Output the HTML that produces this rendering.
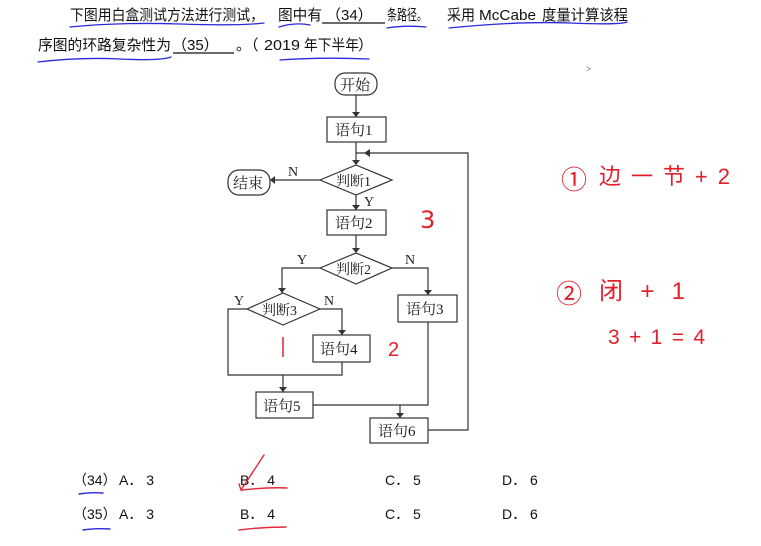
<!DOCTYPE html>
<html><head><meta charset="utf-8"><style>
html,body{margin:0;padding:0;background:#fff;}
svg{display:block;}
.t{font-family:"Liberation Sans","Noto Sans CJK SC",sans-serif;font-size:15px;fill:#111;}
.o{font-family:"Liberation Sans","Noto Sans CJK SC",sans-serif;font-size:14px;fill:#111;}
.f{font-family:"Liberation Serif","Noto Serif CJK SC",serif;font-size:15px;fill:#222;}
.r{font-family:"Liberation Sans","Noto Sans CJK SC",sans-serif;fill:#e0202a;}
</style></head><body>
<svg width="761" height="546" viewBox="0 0 761 546" xmlns="http://www.w3.org/2000/svg">
<!-- header text -->
<text class="t" x="70" y="20" textLength="194" lengthAdjust="spacingAndGlyphs">下图用白盒测试方法进行测试，</text>
<text class="t" x="278" y="20" textLength="44" lengthAdjust="spacingAndGlyphs">图中有</text>
<line x1="322" y1="23" x2="385" y2="23" stroke="#111" stroke-width="1.2"/>
<text class="t" x="326" y="20">（34）</text>
<text class="t" x="387" y="20" textLength="40" lengthAdjust="spacingAndGlyphs">条路径。</text>
<text class="t" x="447" y="20" textLength="28" lengthAdjust="spacingAndGlyphs">采用</text>
<text class="t" x="479" y="20" textLength="57" lengthAdjust="spacingAndGlyphs">McCabe</text>
<text class="t" x="542" y="20" textLength="86" lengthAdjust="spacingAndGlyphs">度量计算该程</text>
<text class="t" x="38" y="50" textLength="133" lengthAdjust="spacingAndGlyphs">序图的环路复杂性为</text>
<line x1="173" y1="53" x2="234" y2="53" stroke="#111" stroke-width="1.2"/>
<text class="t" x="172" y="50">（35）</text>
<text class="t" x="236" y="50">。（</text>
<text class="t" x="264" y="50" textLength="36" lengthAdjust="spacingAndGlyphs">2019</text>
<text class="t" x="304" y="50" textLength="55" lengthAdjust="spacingAndGlyphs">年下半年</text>
<text class="t" x="358" y="50">）</text>
<g fill="none" stroke="#2a2ad8" stroke-width="1.3" stroke-linecap="round">
<path d="M70 27 Q120 22 180 24 T264 23"/>
<path d="M279 27 Q295 22 310 25"/>
<path d="M387 28 Q405 25 426 27"/>
<path d="M449 28 Q520 21 570 23 T627 22"/>
<path d="M38 62 Q80 57 120 59 T171 57"/>
<path d="M280 60 Q320 57 369 59"/>
</g>
<text x="586" y="72" font-size="9" fill="#333">&gt;</text>

<!-- flowchart -->
<g fill="none" stroke="#333" stroke-width="1.2">
<rect x="335" y="73" width="42" height="22" rx="10"/>
<rect x="327" y="117" width="59" height="25"/>
<rect x="228" y="170" width="42" height="25" rx="11"/>
<polygon points="320,180 356,165 392,180 356,195"/>
<rect x="327" y="210" width="59" height="25"/>
<polygon points="320,268 356,253 392,268 356,284"/>
<polygon points="247,309 283,293 320,309 283,325"/>
<rect x="398" y="295" width="59" height="27"/>
<rect x="313" y="335" width="57" height="27"/>
<rect x="256" y="392" width="57" height="26"/>
<rect x="370" y="418" width="58" height="25"/>
<path d="M356 95V117M356 142V165M356 195V210M356 235V253"/>
<path d="M320 180H270"/>
<path d="M428 430H468V153H356"/>
<path d="M320 268H282V293M392 268H428V295"/>
<path d="M247 309H228V375H342V362M320 309H342V335"/>
<path d="M283 375V392M313 405H428V322M400 405V418"/>
</g>
<g fill="#333">
<polygon points="352,112 360,112 356,117"/>
<polygon points="352,160 360,160 356,165"/>
<polygon points="352,205 360,205 356,210"/>
<polygon points="352,248 360,248 356,253"/>
<polygon points="275,176 275,184 270,180"/>
<polygon points="370,149 370,157 364,153"/>
<polygon points="278,288 286,288 282,293"/>
<polygon points="424,290 432,290 428,295"/>
<polygon points="338,330 346,330 342,335"/>
<polygon points="279,387 287,387 283,392"/>
<polygon points="396,413 404,413 400,418"/>
</g>
<g class="f">
<text x="340" y="90">开始</text>
<text x="335" y="135">语句1</text>
<text x="233" y="188">结束</text>
<text x="336" y="186" font-size="14">判断1</text>
<text x="335" y="228">语句2</text>
<text x="336" y="274" font-size="14">判断2</text>
<text x="262" y="315" font-size="14">判断3</text>
<text x="406" y="314">语句3</text>
<text x="320" y="354">语句4</text>
<text x="263" y="411">语句5</text>
<text x="378" y="436">语句6</text>
<text x="288" y="176" font-size="14">N</text>
<text x="364" y="206" font-size="14">Y</text>
<text x="297" y="264" font-size="14">Y</text>
<text x="405" y="264" font-size="14">N</text>
<text x="234" y="305" font-size="14">Y</text>
<text x="324" y="305" font-size="14">N</text>
</g>

<!-- red annotations -->
<g class="r">
<text x="420" y="228" font-size="24" font-family="DejaVu Sans">3</text>
<text x="388" y="356" font-size="20">2</text>
<text x="561" y="189" font-size="26">①</text>
<text x="599" y="184" font-size="22" textLength="131" lengthAdjust="spacing">边一节+2</text>
<text x="556" y="303" font-size="26">②</text>
<text x="599" y="299" font-size="24" textLength="86" lengthAdjust="spacing">闭 + 1</text>
<text x="608" y="344" font-size="21" textLength="97" lengthAdjust="spacing">3+1=4</text>
</g>
<path d="M283 337V357" stroke="#e0202a" stroke-width="1.5"/>

<!-- options -->
<g class="o">
<text x="73" y="485">（34）</text><text x="119" y="485">A． 3</text>
<text x="240" y="485">B． 4</text>
<text x="385" y="485">C． 5</text>
<text x="502" y="485">D． 6</text>
<text x="73" y="519">（35）</text><text x="119" y="519">A． 3</text>
<text x="240" y="519">B． 4</text>
<text x="385" y="519">C． 5</text>
<text x="502" y="519">D． 6</text>
</g>
<g fill="none" stroke-linecap="round" stroke-width="1.4">
<path d="M79 494 Q90 492 103 493" stroke="#2a2ad8"/>
<path d="M83 530 Q95 528 110 529" stroke="#2a2ad8"/>
<path d="M239 484 L241 490 L264 455" stroke="#e02a3a"/>
<path d="M242 490 Q270 487 287 488" stroke="#e02a3a"/>
<path d="M239 530 Q262 527 286 527" stroke="#e02a3a"/>
</g>
</svg>
</body></html>
